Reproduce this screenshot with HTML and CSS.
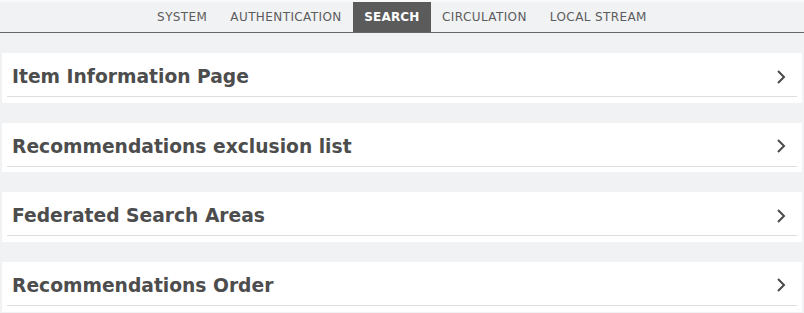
FILE: index.html
```html
<!DOCTYPE html>
<html>
<head>
    <title>Settings</title>
    <link rel="stylesheet" href="styles.css">
</head>
<body>
    <nav class="tabs">
        <a class="tab">System</a>
        <a class="tab">Authentication</a>
        <a class="tab active">Search</a>
        <a class="tab">Circulation</a>
        <a class="tab">Local stream</a>
    </nav>

    <main class="sections">
        <div class="section">
            <div class="section-head">
                <span class="section-title">Item Information Page</span>
                <svg class="chevron" width="12" height="16" viewBox="0 0 12 16">
                    <path d="M3 2 L9 8 L3 14" />
                </svg>
            </div>
        </div>
        <div class="section">
            <div class="section-head">
                <span class="section-title">Recommendations exclusion list</span>
                <svg class="chevron" width="12" height="16" viewBox="0 0 12 16">
                    <path d="M3 2 L9 8 L3 14" />
                </svg>
            </div>
        </div>
        <div class="section">
            <div class="section-head">
                <span class="section-title">Federated Search Areas</span>
                <svg class="chevron" width="12" height="16" viewBox="0 0 12 16">
                    <path d="M3 2 L9 8 L3 14" />
                </svg>
            </div>
        </div>
        <div class="section">
            <div class="section-head">
                <span class="section-title">Recommendations Order</span>
                <svg class="chevron" width="12" height="16" viewBox="0 0 12 16">
                    <path d="M3 2 L9 8 L3 14" />
                </svg>
            </div>
        </div>
    </main>
</body>
</html>
```

FILE: styles.css
```css
body {
    margin: 0;
    background-color: #f1f2f4;
    font-family: "DejaVu Sans", Verdana, sans-serif;
    color: #4d4d4d;
}

.tabs {
    display: flex;
    justify-content: center;
    border-top: 2px solid #f9f9fa;
    border-bottom: 1px solid #666;
    height: 30px;
}

.tab {
    display: flex;
    align-items: center;
    padding: 0 11.5px 1px;
    font-size: 12px;
    letter-spacing: 0.4px;
    text-transform: uppercase;
    color: #5c5c5c;
    cursor: pointer;
}

.tab.active {
    background-color: #5b5b5b;
    color: white;
    font-weight: bold;
    letter-spacing: 0.2px;
    padding: 0 11px 1px;
}

.sections {
    display: flex;
    flex-direction: column;
    gap: 20px;
    padding: 20px 2px 0;
}

.section {
    background-color: white;
    padding: 0 5px 5.67px;
}

.section-head {
    display: flex;
    align-items: center;
    justify-content: space-between;
    box-sizing: border-box;
    height: 44px;
    padding: 4px 10px 0 5px;
    border-bottom: 1px solid #dedede;
}

.section-title {
    font-size: 18.7px;
    font-weight: bold;
}

.chevron {
    fill: none;
    stroke: #4a4a4a;
    stroke-width: 2;
}
```
